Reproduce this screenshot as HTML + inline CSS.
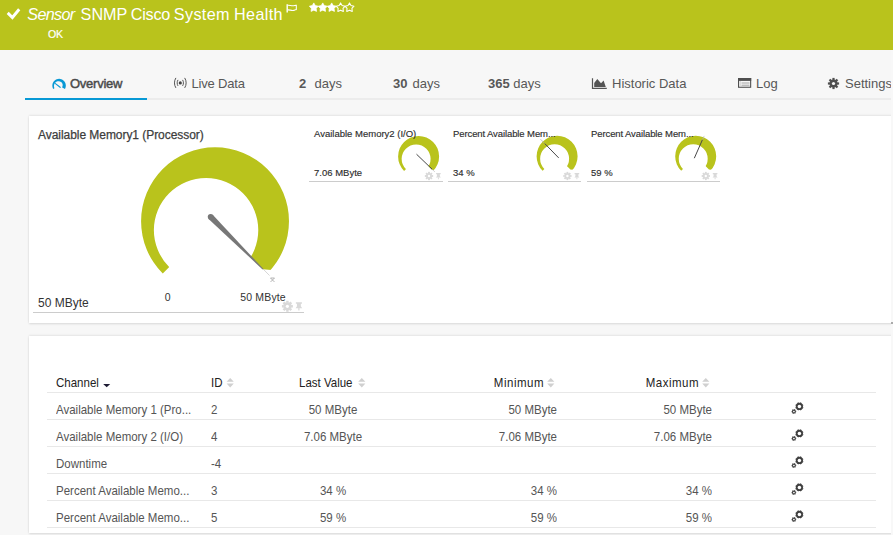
<!DOCTYPE html>
<html><head><meta charset="utf-8">
<style>
*{margin:0;padding:0;box-sizing:border-box}
html,body{width:893px;height:535px;overflow:hidden;background:#f7f7f7;font-family:"Liberation Sans",sans-serif}
.a{position:absolute;white-space:nowrap}
#hdr{position:absolute;left:0;top:0;width:893px;height:50px;background:#b9c31c}
.tab{position:absolute;top:76px;font-size:13px;color:#585858;white-space:nowrap;line-height:15px}
.pnl{position:absolute;background:#fff;box-shadow:0 -1px 2px rgba(0,0,0,0.07),0 1px 2px rgba(0,0,0,0.12)}
.th{position:absolute;top:376px;font-size:11.5px;color:#222;line-height:14px;white-space:nowrap;transform:scaleY(1.09);transform-origin:0 10.8px}
.td{position:absolute;font-size:11.5px;color:#555;line-height:14px;white-space:nowrap;transform:scaleY(1.09);transform-origin:0 10.8px}
.hl{position:absolute;left:47px;width:829px;height:1px;background:#e8e8e8}
.sm{position:absolute;font-size:9.5px;color:#2e2e2e;-webkit-text-stroke:0.15px #2e2e2e;line-height:11px;white-space:nowrap}
</style></head><body>
<div id="hdr"></div>
<!-- checkmark -->
<svg class="a" style="left:5px;top:7px" width="18" height="15" viewBox="0 0 18 15"><path d="M2.7 5.9 L7.4 10.5 L14.2 2.3" stroke="#fff" stroke-width="2.9" fill="none"/></svg>
<div class="a" style="left:27.3px;top:4px;font-size:16.2px;line-height:20px;color:#fff;letter-spacing:-0.7px"><i>Sensor</i></div>
<div class="a" style="left:80.6px;top:4px;font-size:16.2px;line-height:20px;color:#fff">SNMP</div>
<div class="a" style="left:130.8px;top:4px;font-size:16.2px;line-height:20px;color:#fff;letter-spacing:-0.25px">Cisco</div>
<div class="a" style="left:173.8px;top:4px;font-size:16.2px;line-height:20px;color:#fff;letter-spacing:0.35px">System</div>
<div class="a" style="left:234px;top:4px;font-size:16.2px;line-height:20px;color:#fff;letter-spacing:0.35px">Health</div>
<svg class="a" style="left:286px;top:4px" width="12" height="10" viewBox="0 0 12 10"><path d="M1.2 0.2 V8.6" stroke="#fff" stroke-width="1.4" fill="none"/><path d="M1.6 1.2 C3.5 0.9 5 1.9 7 1.8 C8.5 1.7 9.5 0.9 10.3 1.2 V5.6 C9.5 5.4 8.5 6.3 7 6.4 C5 6.5 3.5 5.7 1.6 5.9" stroke="#fff" stroke-width="1.05" fill="none"/></svg>
<svg class="a" style="left:309px;top:2px" width="47" height="11" viewBox="0 0 47 11"><polygon transform="translate(0.0,0.6)" points="4.80,0.30 6.30,2.94 9.27,3.55 7.23,5.79 7.56,8.80 4.80,7.55 2.04,8.80 2.37,5.79 0.33,3.55 3.30,2.94" fill="#fff" stroke="#fff" stroke-width="0.7" stroke-linejoin="round"/><polygon transform="translate(8.95,0.6)" points="4.80,0.30 6.30,2.94 9.27,3.55 7.23,5.79 7.56,8.80 4.80,7.55 2.04,8.80 2.37,5.79 0.33,3.55 3.30,2.94" fill="#fff" stroke="#fff" stroke-width="0.7" stroke-linejoin="round"/><polygon transform="translate(17.9,0.6)" points="4.80,0.30 6.30,2.94 9.27,3.55 7.23,5.79 7.56,8.80 4.80,7.55 2.04,8.80 2.37,5.79 0.33,3.55 3.30,2.94" fill="#fff" stroke="#fff" stroke-width="0.7" stroke-linejoin="round"/><polygon transform="translate(26.8,0.6)" points="4.80,0.30 6.30,2.94 9.27,3.55 7.23,5.79 7.56,8.80 4.80,7.55 2.04,8.80 2.37,5.79 0.33,3.55 3.30,2.94" fill="none" stroke="#fff" stroke-width="1.05" stroke-linejoin="round"/><polygon transform="translate(35.7,0.6)" points="4.80,0.30 6.30,2.94 9.27,3.55 7.23,5.79 7.56,8.80 4.80,7.55 2.04,8.80 2.37,5.79 0.33,3.55 3.30,2.94" fill="none" stroke="#fff" stroke-width="1.05" stroke-linejoin="round"/></svg>
<div class="a" style="left:48px;top:28px;font-size:10.6px;line-height:12px;color:#fff;-webkit-text-stroke:0.2px #fff;letter-spacing:-0.3px">OK</div>

<!-- tabs -->
<div class="a" style="left:25px;top:98px;width:866px;height:2px;background:#ececec"></div>
<div class="a" style="left:25px;top:98px;width:122px;height:2px;background:#0899d5"></div>
<svg class="a" style="left:51.5px;top:77.6px" width="15" height="13" viewBox="0 0 14 12"><path d="M1.14 10.15 L0.68 9.15 L0.40 8.09 L0.30 7.00 L0.40 5.91 L0.68 4.85 L1.14 3.85 L1.77 2.95 L2.55 2.17 L3.45 1.54 L4.45 1.08 L5.51 0.80 L6.60 0.70 L7.69 0.80 L8.75 1.08 L9.75 1.54 L10.65 2.17 L11.43 2.95 L12.06 3.85 L12.52 4.85 L12.80 5.91 L12.90 7.00 L12.80 8.09 L12.52 9.15 L12.06 10.15 L9.28 8.55 L9.59 8.09 L9.81 7.57 L9.94 7.00 L9.96 6.41 L9.89 5.80 L9.70 5.21 L9.40 4.65 L9.00 4.14 L8.51 3.70 L7.93 3.34 L7.29 3.09 L6.60 2.95 L5.88 2.93 L5.16 3.05 L4.46 3.29 L3.79 3.65 L3.19 4.14 L2.68 4.74 L2.27 5.43 L1.99 6.19 L1.84 7.00 L1.83 7.84 L1.98 8.68 L2.27 9.50Z" fill="#0899d5"/><path d="M3.2 5.2 L7.6 8.6" stroke="#0899d5" stroke-width="1.1" stroke-linecap="round"/></svg>
<div class="tab" style="left:70px;color:#4a4a4a;-webkit-text-stroke:0.45px #4a4a4a;letter-spacing:-0.25px">Overview</div>
<svg class="a" style="left:173px;top:77px" width="15" height="12" viewBox="0 0 15 12"><g fill="none" stroke="#555" stroke-width="1"><path d="M2.9 0.9 C1.0 3.8 1.0 8.0 2.9 10.9"/><path d="M11.7 0.9 C13.6 3.8 13.6 8.0 11.7 10.9"/><path d="M5.0 2.9 C3.9 4.6 3.9 7.2 5.0 8.9"/><path d="M9.6 2.9 C10.7 4.6 10.7 7.2 9.6 8.9"/></g><circle cx="7.3" cy="5.9" r="1.55" fill="#444"/></svg>
<div class="tab" style="left:191.6px;letter-spacing:-0.2px">Live Data</div>
<div class="tab" style="left:299px"><b>2</b><span style="margin-left:1px">&nbsp; days</span></div>
<div class="tab" style="left:393px"><b>30</b><span style="margin-left:1.5px"> days</span></div>
<div class="tab" style="left:488px"><b>365</b> days</div>
<svg class="a" style="left:591px;top:78px" width="17" height="12" viewBox="0 0 17 12"><path d="M1.5 0.2 V10.3 H15.8" stroke="#555" stroke-width="1.2" fill="none"/><path d="M3.2 9 L3.2 5 L6.3 1 L10 5.2 L12.6 2.6 L14.8 9 Z" fill="#555"/></svg>
<div class="tab" style="left:612px">Historic Data</div>
<svg class="a" style="left:737.5px;top:78px" width="14" height="10" viewBox="0 0 14 10"><rect x="0.55" y="0.55" width="12.1" height="8.7" fill="none" stroke="#4f4f4f" stroke-width="1.1"/><rect x="0" y="0" width="13.2" height="2.9" fill="#4f4f4f"/><path d="M3.5 5 H11.5 M3.5 7.2 H11.5" stroke="#999" stroke-width="0.9"/><path d="M2.3 3 V9" stroke="#ccc" stroke-width="0.8"/></svg>
<div class="tab" style="left:756px">Log</div>
<svg class="a" style="left:826.8px;top:76.6px" width="13" height="13" viewBox="-6.5 -6.5 13 13"><g fill="#4f4f4f"><circle r="4"/><rect x="-1.1" y="-5.6" width="2.2" height="2.5" transform="rotate(0)"/><rect x="-1.1" y="-5.6" width="2.2" height="2.5" transform="rotate(45)"/><rect x="-1.1" y="-5.6" width="2.2" height="2.5" transform="rotate(90)"/><rect x="-1.1" y="-5.6" width="2.2" height="2.5" transform="rotate(135)"/><rect x="-1.1" y="-5.6" width="2.2" height="2.5" transform="rotate(180)"/><rect x="-1.1" y="-5.6" width="2.2" height="2.5" transform="rotate(225)"/><rect x="-1.1" y="-5.6" width="2.2" height="2.5" transform="rotate(270)"/><rect x="-1.1" y="-5.6" width="2.2" height="2.5" transform="rotate(315)"/></g><circle r="1.6" fill="#f7f7f7"/></svg>
<div class="tab" style="left:845px">Settings</div>

<!-- panel 1 -->
<div class="pnl" style="left:29px;top:116px;width:866px;height:207px"></div>
<div class="a" style="left:38px;top:128px;font-size:12px;line-height:14px;color:#3d3d3d;-webkit-text-stroke:0.25px #3d3d3d;letter-spacing:-0.05px">Available Memory1 (Processor)</div>
<div class="a" style="left:38px;top:296px;font-size:12px;line-height:14px;color:#333">50 MByte</div>
<div class="a" style="left:33px;top:312px;width:271px;height:1px;background:#ccc"></div>
<div class="a" style="left:164.8px;top:291px;font-size:10.5px;line-height:12px;color:#333">0</div>
<div class="a" style="left:240.3px;top:291px;font-size:10.5px;line-height:12px;color:#333;letter-spacing:0.15px">50 MByte</div>
<svg class="a" style="left:0;top:0" width="893" height="330" viewBox="0 0 893 330">
  <clipPath id="g1"><polygon points="215.03,221.25 15.03,421.25 15.03,21.25 415.03,21.25 615.03,21.25 435.36,288.38 271.14,270.07 262.93,269.15"/></clipPath><path clip-path="url(#g1)" fill-rule="evenodd" d="M141.08 221.25 A73.95 73.95 0 1 1 288.98 221.25 A73.95 73.95 0 1 1 141.08 221.25 Z M153.87 230.11 A52.20 52.20 0 1 0 258.27 230.11 A52.20 52.20 0 1 0 153.87 230.11 Z" fill="#b9c31c"/>
  <polygon points="208.60,218.92 262.58,269.44 263.22,268.80 212.70,214.82" fill="#777"/><circle cx="210.65" cy="216.87" r="2.90" fill="#777"/>
  <path d="M263.1 269 L269.5 275.5" stroke="#bbb" stroke-width="0.6"/>
  <path d="M270.5 278 L274.5 282 M274.5 278 L270.5 282 M270.5 278 H274.5" stroke="#999" stroke-width="0.7" fill="none"/>
  <clipPath id="g10"><polygon points="418.60,156.40 363.16,211.84 363.16,100.96 474.04,100.96 529.49,100.96 479.68,175.01 434.15,169.93 431.88,169.68"/></clipPath><path clip-path="url(#g10)" fill-rule="evenodd" d="M398.10 156.40 A20.50 20.50 0 1 1 439.10 156.40 A20.50 20.50 0 1 1 398.10 156.40 Z M401.65 158.86 A14.47 14.47 0 1 0 430.59 158.86 A14.47 14.47 0 1 0 401.65 158.86 Z" fill="#b9c31c"/>
  <clipPath id="g11"><polygon points="557.10,156.30 501.66,211.74 501.66,100.86 612.54,100.86 667.99,100.86 618.18,174.91 572.65,169.83 570.38,169.58"/></clipPath><path clip-path="url(#g11)" fill-rule="evenodd" d="M536.60 156.30 A20.50 20.50 0 1 1 577.60 156.30 A20.50 20.50 0 1 1 536.60 156.30 Z M540.15 158.76 A14.47 14.47 0 1 0 569.09 158.76 A14.47 14.47 0 1 0 540.15 158.76 Z" fill="#b9c31c"/>
  <clipPath id="g12"><polygon points="695.70,156.30 640.26,211.74 640.26,100.86 751.14,100.86 806.59,100.86 756.78,174.91 711.25,169.83 708.98,169.58"/></clipPath><path clip-path="url(#g12)" fill-rule="evenodd" d="M675.20 156.30 A20.50 20.50 0 1 1 716.20 156.30 A20.50 20.50 0 1 1 675.20 156.30 Z M678.75 158.76 A14.47 14.47 0 1 0 707.69 158.76 A14.47 14.47 0 1 0 678.75 158.76 Z" fill="#b9c31c"/>
  <path d="M416.5 154.2 L432.3 169.4" stroke="#484848" stroke-width="1"/>
  <path d="M432.3 169.4 L434.8 171.8" stroke="#bbb" stroke-width="0.7"/>
  <path d="M558.7 157.9 L544.7 143.5" stroke="#484848" stroke-width="1"/>
  <path d="M544.7 143.5 L540.5 139.2" stroke="#aaa" stroke-width="0.7"/>
  <path d="M694.3 158.2 L702.5 139.6" stroke="#484848" stroke-width="1"/>
  <path d="M702.5 139.6 L704.2 135.9" stroke="#bbb" stroke-width="0.7"/>
<g transform="translate(287.40,306.30) scale(1.22)"><circle r="3.3" fill="#d9d9d9"/><rect x="-1" y="-4.5" width="2" height="1.6" fill="#d9d9d9" transform="rotate(0)"/><rect x="-1" y="-4.5" width="2" height="1.6" fill="#d9d9d9" transform="rotate(45)"/><rect x="-1" y="-4.5" width="2" height="1.6" fill="#d9d9d9" transform="rotate(90)"/><rect x="-1" y="-4.5" width="2" height="1.6" fill="#d9d9d9" transform="rotate(135)"/><rect x="-1" y="-4.5" width="2" height="1.6" fill="#d9d9d9" transform="rotate(180)"/><rect x="-1" y="-4.5" width="2" height="1.6" fill="#d9d9d9" transform="rotate(225)"/><rect x="-1" y="-4.5" width="2" height="1.6" fill="#d9d9d9" transform="rotate(270)"/><rect x="-1" y="-4.5" width="2" height="1.6" fill="#d9d9d9" transform="rotate(315)"/><circle r="1.3" fill="#fff"/></g><g transform="translate(295.60,302.20) scale(1.22)" fill="#d9d9d9"><path d="M0.2 0 H5.2 V1.3 H4.3 V3.4 L5.4 4.9 H0 L1.1 3.4 V1.3 H0.2 Z"/><rect x="2.2" y="4.8" width="1" height="2"/></g>
  <g transform="translate(429.00,176.00) scale(0.92)"><circle r="3.3" fill="#d9d9d9"/><rect x="-1" y="-4.5" width="2" height="1.6" fill="#d9d9d9" transform="rotate(0)"/><rect x="-1" y="-4.5" width="2" height="1.6" fill="#d9d9d9" transform="rotate(45)"/><rect x="-1" y="-4.5" width="2" height="1.6" fill="#d9d9d9" transform="rotate(90)"/><rect x="-1" y="-4.5" width="2" height="1.6" fill="#d9d9d9" transform="rotate(135)"/><rect x="-1" y="-4.5" width="2" height="1.6" fill="#d9d9d9" transform="rotate(180)"/><rect x="-1" y="-4.5" width="2" height="1.6" fill="#d9d9d9" transform="rotate(225)"/><rect x="-1" y="-4.5" width="2" height="1.6" fill="#d9d9d9" transform="rotate(270)"/><rect x="-1" y="-4.5" width="2" height="1.6" fill="#d9d9d9" transform="rotate(315)"/><circle r="1.3" fill="#fff"/></g><g transform="translate(435.90,173.00) scale(0.92)" fill="#d9d9d9"><path d="M0.2 0 H5.2 V1.3 H4.3 V3.4 L5.4 4.9 H0 L1.1 3.4 V1.3 H0.2 Z"/><rect x="2.2" y="4.8" width="1" height="2"/></g>
  <g transform="translate(567.40,176.00) scale(0.92)"><circle r="3.3" fill="#d9d9d9"/><rect x="-1" y="-4.5" width="2" height="1.6" fill="#d9d9d9" transform="rotate(0)"/><rect x="-1" y="-4.5" width="2" height="1.6" fill="#d9d9d9" transform="rotate(45)"/><rect x="-1" y="-4.5" width="2" height="1.6" fill="#d9d9d9" transform="rotate(90)"/><rect x="-1" y="-4.5" width="2" height="1.6" fill="#d9d9d9" transform="rotate(135)"/><rect x="-1" y="-4.5" width="2" height="1.6" fill="#d9d9d9" transform="rotate(180)"/><rect x="-1" y="-4.5" width="2" height="1.6" fill="#d9d9d9" transform="rotate(225)"/><rect x="-1" y="-4.5" width="2" height="1.6" fill="#d9d9d9" transform="rotate(270)"/><rect x="-1" y="-4.5" width="2" height="1.6" fill="#d9d9d9" transform="rotate(315)"/><circle r="1.3" fill="#fff"/></g><g transform="translate(574.40,173.00) scale(0.92)" fill="#d9d9d9"><path d="M0.2 0 H5.2 V1.3 H4.3 V3.4 L5.4 4.9 H0 L1.1 3.4 V1.3 H0.2 Z"/><rect x="2.2" y="4.8" width="1" height="2"/></g>
  <g transform="translate(705.80,176.00) scale(0.92)"><circle r="3.3" fill="#d9d9d9"/><rect x="-1" y="-4.5" width="2" height="1.6" fill="#d9d9d9" transform="rotate(0)"/><rect x="-1" y="-4.5" width="2" height="1.6" fill="#d9d9d9" transform="rotate(45)"/><rect x="-1" y="-4.5" width="2" height="1.6" fill="#d9d9d9" transform="rotate(90)"/><rect x="-1" y="-4.5" width="2" height="1.6" fill="#d9d9d9" transform="rotate(135)"/><rect x="-1" y="-4.5" width="2" height="1.6" fill="#d9d9d9" transform="rotate(180)"/><rect x="-1" y="-4.5" width="2" height="1.6" fill="#d9d9d9" transform="rotate(225)"/><rect x="-1" y="-4.5" width="2" height="1.6" fill="#d9d9d9" transform="rotate(270)"/><rect x="-1" y="-4.5" width="2" height="1.6" fill="#d9d9d9" transform="rotate(315)"/><circle r="1.3" fill="#fff"/></g><g transform="translate(712.60,173.00) scale(0.92)" fill="#d9d9d9"><path d="M0.2 0 H5.2 V1.3 H4.3 V3.4 L5.4 4.9 H0 L1.1 3.4 V1.3 H0.2 Z"/><rect x="2.2" y="4.8" width="1" height="2"/></g>

</svg>
<div class="sm" style="left:314px;top:128px">Available Memory2 (I/O)</div>
<div class="sm" style="left:314px;top:167px">7.06 MByte</div>
<div class="a" style="left:309px;top:181px;width:134px;height:1px;background:#ccc"></div>
<div class="sm" style="left:453px;top:128px;letter-spacing:-0.1px">Percent Available Mem...</div>
<div class="sm" style="left:453px;top:167px">34 %</div>
<div class="a" style="left:448px;top:181px;width:133px;height:1px;background:#ccc"></div>
<div class="sm" style="left:591px;top:128px;letter-spacing:-0.1px">Percent Available Mem...</div>
<div class="sm" style="left:591px;top:167px">59 %</div>
<div class="a" style="left:587px;top:181px;width:133px;height:1px;background:#ccc"></div>

<!-- panel 2 -->
<div class="pnl" style="left:29px;top:336px;width:866px;height:197px"></div>
<div class="th" style="left:56px">Channel</div>
<div class="th" style="left:211px">ID</div>
<div class="th" style="left:299px">Last Value</div>
<div class="th" style="left:444px;width:100px;text-align:right;letter-spacing:0.5px">Minimum</div>
<div class="th" style="left:599px;width:100px;text-align:right;letter-spacing:0.5px">Maximum</div>
<svg class="a" style="left:0;top:370px" width="893" height="160" viewBox="0 370 893 160">
  <path d="M103.2 384 H110.2 L106.7 387.3 Z" fill="#1d1b33"/>
  <g fill="#d0d0d0">
  <path d="M226.6 381.7 L230.2 378 L233.8 381.7 Z M226.6 383.6 L230.2 387.4 L233.8 383.6 Z"/>
  <path d="M358.2 381.7 L361.8 378 L365.4 381.7 Z M358.2 383.6 L361.8 387.4 L365.4 383.6 Z"/>
  <path d="M547.2 381.7 L550.8 378 L554.4 381.7 Z M547.2 383.6 L550.8 387.4 L554.4 383.6 Z"/>
  <path d="M702.2 381.7 L705.8 378 L709.4 381.7 Z M702.2 383.6 L705.8 387.4 L709.4 383.6 Z"/>
  </g>
  <rect x="47" y="392" width="829" height="1" fill="#e8e8e8"/>
  <rect x="47" y="419" width="829" height="1" fill="#e8e8e8"/>
  <rect x="47" y="446" width="829" height="1" fill="#e8e8e8"/>
  <rect x="47" y="473" width="829" height="1" fill="#e8e8e8"/>
  <rect x="47" y="500" width="829" height="1" fill="#e8e8e8"/>
  <rect x="47" y="527" width="829" height="1" fill="#e8e8e8"/>
  <g transform="translate(799.40,406.40)" fill="#404040"><circle r="3.60"/><rect x="-0.75" y="-4.05" width="1.50" height="0.75" transform="rotate(22.5)"/><rect x="-0.75" y="-4.05" width="1.50" height="0.75" transform="rotate(67.5)"/><rect x="-0.75" y="-4.05" width="1.50" height="0.75" transform="rotate(112.5)"/><rect x="-0.75" y="-4.05" width="1.50" height="0.75" transform="rotate(157.5)"/><rect x="-0.75" y="-4.05" width="1.50" height="0.75" transform="rotate(202.5)"/><rect x="-0.75" y="-4.05" width="1.50" height="0.75" transform="rotate(247.5)"/><rect x="-0.75" y="-4.05" width="1.50" height="0.75" transform="rotate(292.5)"/><rect x="-0.75" y="-4.05" width="1.50" height="0.75" transform="rotate(337.5)"/><circle r="1.75" fill="#fff"/></g><g transform="translate(793.90,411.50)" fill="#404040"><circle r="2.00"/><rect x="-0.55" y="-2.35" width="1.10" height="0.65" transform="rotate(22.5)"/><rect x="-0.55" y="-2.35" width="1.10" height="0.65" transform="rotate(82.5)"/><rect x="-0.55" y="-2.35" width="1.10" height="0.65" transform="rotate(142.5)"/><rect x="-0.55" y="-2.35" width="1.10" height="0.65" transform="rotate(202.5)"/><rect x="-0.55" y="-2.35" width="1.10" height="0.65" transform="rotate(262.5)"/><rect x="-0.55" y="-2.35" width="1.10" height="0.65" transform="rotate(322.5)"/><circle r="0.85" fill="#fff"/></g>
  <g transform="translate(799.40,433.40)" fill="#404040"><circle r="3.60"/><rect x="-0.75" y="-4.05" width="1.50" height="0.75" transform="rotate(22.5)"/><rect x="-0.75" y="-4.05" width="1.50" height="0.75" transform="rotate(67.5)"/><rect x="-0.75" y="-4.05" width="1.50" height="0.75" transform="rotate(112.5)"/><rect x="-0.75" y="-4.05" width="1.50" height="0.75" transform="rotate(157.5)"/><rect x="-0.75" y="-4.05" width="1.50" height="0.75" transform="rotate(202.5)"/><rect x="-0.75" y="-4.05" width="1.50" height="0.75" transform="rotate(247.5)"/><rect x="-0.75" y="-4.05" width="1.50" height="0.75" transform="rotate(292.5)"/><rect x="-0.75" y="-4.05" width="1.50" height="0.75" transform="rotate(337.5)"/><circle r="1.75" fill="#fff"/></g><g transform="translate(793.90,438.50)" fill="#404040"><circle r="2.00"/><rect x="-0.55" y="-2.35" width="1.10" height="0.65" transform="rotate(22.5)"/><rect x="-0.55" y="-2.35" width="1.10" height="0.65" transform="rotate(82.5)"/><rect x="-0.55" y="-2.35" width="1.10" height="0.65" transform="rotate(142.5)"/><rect x="-0.55" y="-2.35" width="1.10" height="0.65" transform="rotate(202.5)"/><rect x="-0.55" y="-2.35" width="1.10" height="0.65" transform="rotate(262.5)"/><rect x="-0.55" y="-2.35" width="1.10" height="0.65" transform="rotate(322.5)"/><circle r="0.85" fill="#fff"/></g>
  <g transform="translate(799.40,460.40)" fill="#404040"><circle r="3.60"/><rect x="-0.75" y="-4.05" width="1.50" height="0.75" transform="rotate(22.5)"/><rect x="-0.75" y="-4.05" width="1.50" height="0.75" transform="rotate(67.5)"/><rect x="-0.75" y="-4.05" width="1.50" height="0.75" transform="rotate(112.5)"/><rect x="-0.75" y="-4.05" width="1.50" height="0.75" transform="rotate(157.5)"/><rect x="-0.75" y="-4.05" width="1.50" height="0.75" transform="rotate(202.5)"/><rect x="-0.75" y="-4.05" width="1.50" height="0.75" transform="rotate(247.5)"/><rect x="-0.75" y="-4.05" width="1.50" height="0.75" transform="rotate(292.5)"/><rect x="-0.75" y="-4.05" width="1.50" height="0.75" transform="rotate(337.5)"/><circle r="1.75" fill="#fff"/></g><g transform="translate(793.90,465.50)" fill="#404040"><circle r="2.00"/><rect x="-0.55" y="-2.35" width="1.10" height="0.65" transform="rotate(22.5)"/><rect x="-0.55" y="-2.35" width="1.10" height="0.65" transform="rotate(82.5)"/><rect x="-0.55" y="-2.35" width="1.10" height="0.65" transform="rotate(142.5)"/><rect x="-0.55" y="-2.35" width="1.10" height="0.65" transform="rotate(202.5)"/><rect x="-0.55" y="-2.35" width="1.10" height="0.65" transform="rotate(262.5)"/><rect x="-0.55" y="-2.35" width="1.10" height="0.65" transform="rotate(322.5)"/><circle r="0.85" fill="#fff"/></g>
  <g transform="translate(799.40,487.40)" fill="#404040"><circle r="3.60"/><rect x="-0.75" y="-4.05" width="1.50" height="0.75" transform="rotate(22.5)"/><rect x="-0.75" y="-4.05" width="1.50" height="0.75" transform="rotate(67.5)"/><rect x="-0.75" y="-4.05" width="1.50" height="0.75" transform="rotate(112.5)"/><rect x="-0.75" y="-4.05" width="1.50" height="0.75" transform="rotate(157.5)"/><rect x="-0.75" y="-4.05" width="1.50" height="0.75" transform="rotate(202.5)"/><rect x="-0.75" y="-4.05" width="1.50" height="0.75" transform="rotate(247.5)"/><rect x="-0.75" y="-4.05" width="1.50" height="0.75" transform="rotate(292.5)"/><rect x="-0.75" y="-4.05" width="1.50" height="0.75" transform="rotate(337.5)"/><circle r="1.75" fill="#fff"/></g><g transform="translate(793.90,492.50)" fill="#404040"><circle r="2.00"/><rect x="-0.55" y="-2.35" width="1.10" height="0.65" transform="rotate(22.5)"/><rect x="-0.55" y="-2.35" width="1.10" height="0.65" transform="rotate(82.5)"/><rect x="-0.55" y="-2.35" width="1.10" height="0.65" transform="rotate(142.5)"/><rect x="-0.55" y="-2.35" width="1.10" height="0.65" transform="rotate(202.5)"/><rect x="-0.55" y="-2.35" width="1.10" height="0.65" transform="rotate(262.5)"/><rect x="-0.55" y="-2.35" width="1.10" height="0.65" transform="rotate(322.5)"/><circle r="0.85" fill="#fff"/></g>
  <g transform="translate(799.40,514.40)" fill="#404040"><circle r="3.60"/><rect x="-0.75" y="-4.05" width="1.50" height="0.75" transform="rotate(22.5)"/><rect x="-0.75" y="-4.05" width="1.50" height="0.75" transform="rotate(67.5)"/><rect x="-0.75" y="-4.05" width="1.50" height="0.75" transform="rotate(112.5)"/><rect x="-0.75" y="-4.05" width="1.50" height="0.75" transform="rotate(157.5)"/><rect x="-0.75" y="-4.05" width="1.50" height="0.75" transform="rotate(202.5)"/><rect x="-0.75" y="-4.05" width="1.50" height="0.75" transform="rotate(247.5)"/><rect x="-0.75" y="-4.05" width="1.50" height="0.75" transform="rotate(292.5)"/><rect x="-0.75" y="-4.05" width="1.50" height="0.75" transform="rotate(337.5)"/><circle r="1.75" fill="#fff"/></g><g transform="translate(793.90,519.50)" fill="#404040"><circle r="2.00"/><rect x="-0.55" y="-2.35" width="1.10" height="0.65" transform="rotate(22.5)"/><rect x="-0.55" y="-2.35" width="1.10" height="0.65" transform="rotate(82.5)"/><rect x="-0.55" y="-2.35" width="1.10" height="0.65" transform="rotate(142.5)"/><rect x="-0.55" y="-2.35" width="1.10" height="0.65" transform="rotate(202.5)"/><rect x="-0.55" y="-2.35" width="1.10" height="0.65" transform="rotate(262.5)"/><rect x="-0.55" y="-2.35" width="1.10" height="0.65" transform="rotate(322.5)"/><circle r="0.85" fill="#fff"/></g>
</svg>
<div class="td" style="left:56px;top:403px">Available Memory 1 (Pro...</div>
<div class="td" style="left:211px;top:403px">2</div>
<div class="td" style="left:283px;width:100px;text-align:center;top:403px">50 MByte</div>
<div class="td" style="left:457px;width:100px;text-align:right;top:403px">50 MByte</div>
<div class="td" style="left:612px;width:100px;text-align:right;top:403px">50 MByte</div>
<div class="td" style="left:56px;top:430px">Available Memory 2 (I/O)</div>
<div class="td" style="left:211px;top:430px">4</div>
<div class="td" style="left:283px;width:100px;text-align:center;top:430px">7.06 MByte</div>
<div class="td" style="left:457px;width:100px;text-align:right;top:430px">7.06 MByte</div>
<div class="td" style="left:612px;width:100px;text-align:right;top:430px">7.06 MByte</div>
<div class="td" style="left:56px;top:457px">Downtime</div>
<div class="td" style="left:211px;top:457px">-4</div>
<div class="td" style="left:56px;top:484px">Percent Available Memo...</div>
<div class="td" style="left:211px;top:484px">3</div>
<div class="td" style="left:283px;width:100px;text-align:center;top:484px">34 %</div>
<div class="td" style="left:457px;width:100px;text-align:right;top:484px">34 %</div>
<div class="td" style="left:612px;width:100px;text-align:right;top:484px">34 %</div>
<div class="td" style="left:56px;top:511px">Percent Available Memo...</div>
<div class="td" style="left:211px;top:511px">5</div>
<div class="td" style="left:283px;width:100px;text-align:center;top:511px">59 %</div>
<div class="td" style="left:457px;width:100px;text-align:right;top:511px">59 %</div>
<div class="td" style="left:612px;width:100px;text-align:right;top:511px">59 %</div>
<div class="a" style="left:891px;top:50px;width:2px;height:485px;background:#f8f8f8"></div>
<div class="a" style="left:891px;top:322px;width:2px;height:2px;background:#aaa"></div>
</body></html>
